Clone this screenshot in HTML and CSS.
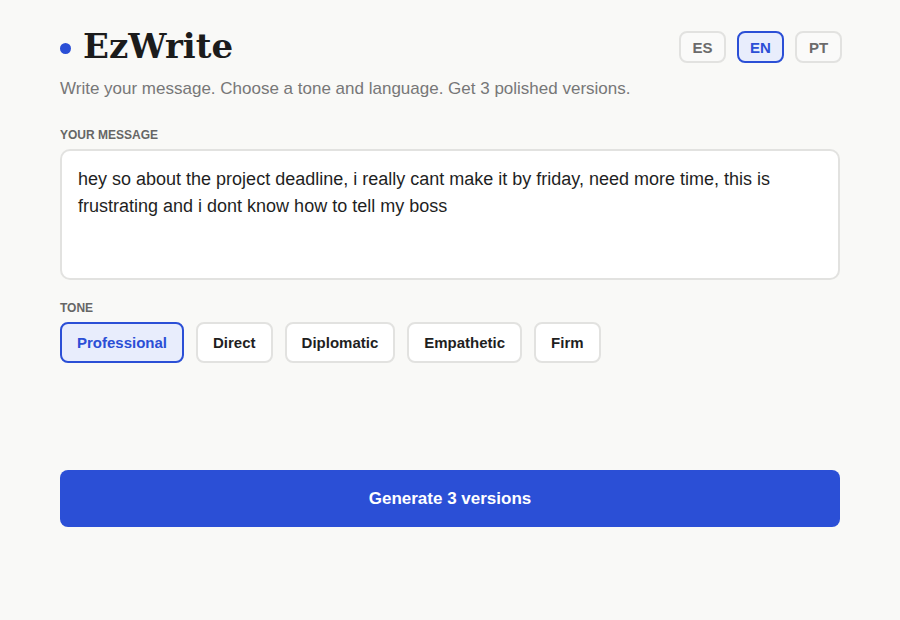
FILE: index.html
```html
<!DOCTYPE html>
<html lang="en">
<head>
  <meta charset="UTF-8" />
  <meta name="viewport" content="width=device-width, initial-scale=1.0" />
  <title>EzWrite</title>
  <link rel="stylesheet" href="styles.css">
</head>
<body>
  <main class="app">
    <header class="top">
      <div class="brand">
        <span class="brand-dot"></span>
        <h1 class="brand-name">EzWrite</h1>
      </div>
      <div class="langs">
        <button class="lang-btn">ES</button>
        <button class="lang-btn active">EN</button>
        <button class="lang-btn">PT</button>
      </div>
    </header>
    <p class="intro">Write your message. Choose a tone and language. Get 3 polished versions.</p>

    <label class="field-label" for="msg">Your message</label>
    <textarea id="msg" class="message">hey so about the project deadline, i really cant make it by friday, need more time, this is frustrating and i dont know how to tell my boss</textarea>

    <div class="field-label">Tone</div>
    <div class="tones">
      <button class="tone-btn active">Professional</button>
      <button class="tone-btn">Direct</button>
      <button class="tone-btn">Diplomatic</button>
      <button class="tone-btn">Empathetic</button>
      <button class="tone-btn">Firm</button>
    </div>

    <button class="generate-btn">Generate 3 versions</button>
  </main>
</body>
</html>
```

FILE: styles.css
```css
body {
  margin: 0;
  background: #f9f9f7;
  font-family: 'Liberation Sans', Arial, sans-serif;
  color: #1f1f1f;
}
.app {
  width: 780px;
  margin: 0 auto;
  padding: 30px 0 40px;
  display: flex;
  flex-direction: column;
}
/* Header */
.top {
  display: flex;
  justify-content: space-between;
  align-items: flex-start;
}
.brand {
  display: flex;
  align-items: center;
  gap: 12px;
}
.brand-dot {
  width: 11px;
  height: 11px;
  border-radius: 50%;
  background: #2b4fd6;
  margin-top: 4px;
}
.brand-name {
  margin: 0;
  font-family: 'DejaVu Serif', serif;
  font-size: 34px;
  font-weight: 700;
  line-height: 32px;
  color: #1c1c1c;
}
.langs {
  display: flex;
  gap: 11px;
  margin-top: 1px;
  margin-right: -2px;
}
.lang-btn {
  width: 47px;
  height: 32px;
  border: 2px solid #e2e2e0;
  border-radius: 8px;
  background: #fafaf9;
  font-family: inherit;
  font-size: 15px;
  font-weight: 700;
  color: #6b6b6b;
  cursor: pointer;
}
.lang-btn.active {
  background: #e8edfc;
  border-color: #2b4fd6;
  color: #2b4fd6;
}
.intro {
  margin: 16px 0 0;
  font-size: 17px;
  color: #777;
}
/* Fields */
.field-label {
  display: block;
  margin: 29px 0 7px;
  font-size: 12px;
  font-weight: 700;
  text-transform: uppercase;
  color: #666;
}
.message {
  box-sizing: border-box;
  width: 100%;
  height: 131px;
  padding: 15px 16px;
  border: 2px solid #e2e2e0;
  border-radius: 10px;
  background: #fff;
  font-family: inherit;
  font-size: 18px;
  line-height: 27px;
  color: #1f1f1f;
  resize: none;
  outline: none;
}
.message + .field-label {
  margin-top: 21px;
}
.tones {
  display: flex;
  gap: 12px;
}
.tone-btn {
  height: 41px;
  padding: 0 15px;
  border: 2px solid #e2e2e0;
  border-radius: 8px;
  background: #fff;
  font-family: inherit;
  font-size: 15px;
  font-weight: 700;
  color: #1f1f1f;
  cursor: pointer;
}
.tone-btn.active {
  background: #e8edfc;
  border-color: #2b4fd6;
  color: #2b4fd6;
}
.generate-btn {
  margin-top: 107px;
  height: 57px;
  border: none;
  border-radius: 8px;
  background: #2b4fd6;
  font-family: inherit;
  font-size: 17px;
  font-weight: 700;
  color: #fff;
  cursor: pointer;
}
```
